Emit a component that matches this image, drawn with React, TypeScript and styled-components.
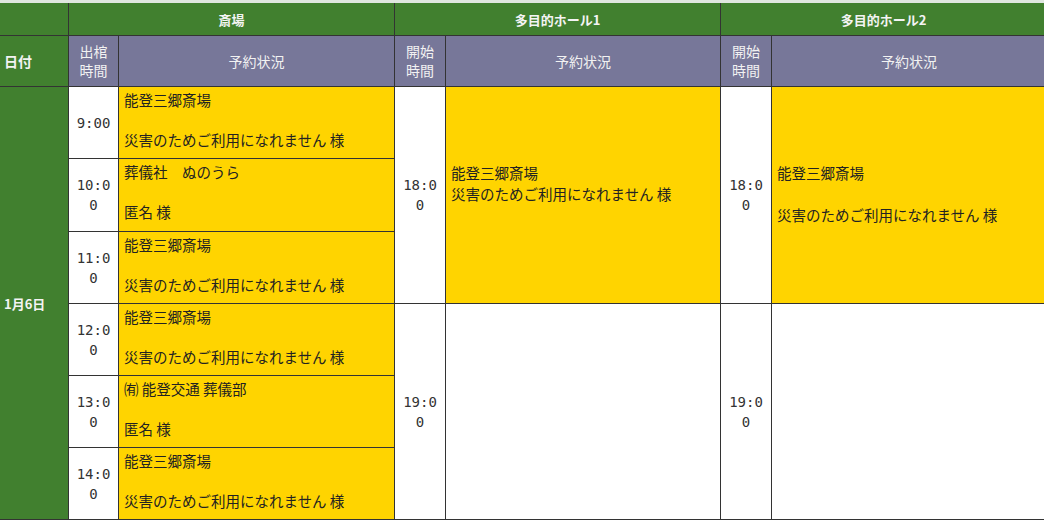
import styled, { createGlobalStyle } from 'styled-components'

const GlobalStyle = createGlobalStyle`
  html, body {
    margin: 0;
    padding: 0;
    background: #dfe7df;
    overflow: hidden;
  }
  body {
    font-family: "Noto Sans CJK JP", "Noto Sans", sans-serif;
    color: #222;
  }
`

const colors = {
  green: '#41802f',
  purple: '#777799',
  gold: '#ffd400',
  line: '#333',
}

const Page = styled.div`
  padding-top: 3px;
  width: 1044px;
  overflow: hidden;
`

const Table = styled.table`
  border-collapse: collapse;
  table-layout: fixed;
  width: 1047px;
  margin-left: -1px;
  font-size: 14.5px;
`

const GroupHead = styled.th`
  background: ${colors.green};
  color: #f4f4f4;
  font-size: 13px;
  font-weight: bold;
  height: 32px;
  padding: 0;
  border: 1px solid ${colors.line};
  border-top: none;
`

const SubHead = styled.th<{ $green?: boolean; $left?: boolean }>`
  background: ${({ $green }) => ($green ? colors.green : colors.purple)};
  color: #f2f2f2;
  font-size: 14px;
  font-weight: ${({ $green }) => ($green ? 'bold' : 'normal')};
  text-align: ${({ $left }) => ($left ? 'left' : 'center')};
  line-height: 19px;
  height: 50px;
  padding: 0 4px;
  border: 1px solid ${colors.line};
`

const DateCell = styled.td`
  background: ${colors.green};
  color: #f4f4f4;
  font-weight: bold;
  font-size: 13px;
  padding: 0 4px;
  border: 1px solid ${colors.line};
`

const TimeCell = styled.td`
  background: #fff;
  font-family: "DejaVu Sans Mono", monospace;
  font-size: 14px;
  line-height: 20px;
  color: #333;
  text-align: center;
  vertical-align: middle;
  word-break: break-all;
  padding: 0 4px;
  border: 1px solid ${colors.line};
`

const StatusCell = styled.td<{ $booked?: boolean; $middle?: boolean }>`
  background: ${({ $booked }) => ($booked ? colors.gold : '#fff')};
  vertical-align: ${({ $middle }) => ($middle ? 'middle' : 'top')};
  line-height: ${({ $middle }) => ($middle ? '21px' : '20px')};
  padding: ${({ $middle }) => ($middle ? '0 5px 3px' : '3px 5px 0')};
  border: 1px solid ${colors.line};
`

const BodyRow = styled.tr<{ $tall?: boolean }>`
  height: ${({ $tall }) => ($tall ? '73px' : '72px')};
`

const Line = styled.div`
  min-height: 1em;
  white-space: nowrap;
`

type Booking = { lines: string[] }

const saijo: { time: string; booking: Booking }[] = [
  { time: '9:00', booking: { lines: ['能登三郷斎場', '', '災害のためご利用になれません 様'] } },
  { time: '10:00', booking: { lines: ['葬儀社　ぬのうら', '', '匿名 様'] } },
  { time: '11:00', booking: { lines: ['能登三郷斎場', '', '災害のためご利用になれません 様'] } },
  { time: '12:00', booking: { lines: ['能登三郷斎場', '', '災害のためご利用になれません 様'] } },
  { time: '13:00', booking: { lines: ['㈲ 能登交通 葬儀部', '', '匿名 様'] } },
  { time: '14:00', booking: { lines: ['能登三郷斎場', '', '災害のためご利用になれません 様'] } },
]

const hall1 = [
  { time: '18:00', lines: ['能登三郷斎場', '災害のためご利用になれません 様', ''] },
  { time: '19:00', lines: [] as string[] },
]

const hall2 = [
  { time: '18:00', lines: ['能登三郷斎場', '', '災害のためご利用になれません 様'] },
  { time: '19:00', lines: [] as string[] },
]

function Lines({ lines }: { lines: string[] }) {
  return (
    <>
      {lines.map((l, i) => (
        <Line key={i}>{l || '\u00a0'}</Line>
      ))}
    </>
  )
}

export default function App() {
  return (
    <Page>
      <GlobalStyle />
      <Table>
        <colgroup>
          <col style={{ width: 69 }} />
          <col style={{ width: 50 }} />
          <col style={{ width: 276 }} />
          <col style={{ width: 51 }} />
          <col style={{ width: 275 }} />
          <col style={{ width: 51 }} />
          <col style={{ width: 275 }} />
        </colgroup>
        <thead>
          <tr>
            <GroupHead />
            <GroupHead colSpan={2}>斎場</GroupHead>
            <GroupHead colSpan={2}>多目的ホール1</GroupHead>
            <GroupHead colSpan={2}>多目的ホール2</GroupHead>
          </tr>
          <tr>
            <SubHead $green $left>日付</SubHead>
            <SubHead>出棺<br />時間</SubHead>
            <SubHead>予約状況</SubHead>
            <SubHead>開始<br />時間</SubHead>
            <SubHead>予約状況</SubHead>
            <SubHead>開始<br />時間</SubHead>
            <SubHead>予約状況</SubHead>
          </tr>
        </thead>
        <tbody>
          {saijo.map((row, i) => {
            const block = i % 3 === 0 ? i / 3 : -1
            return (
              <BodyRow key={row.time} $tall={i === 1}>
                {i === 0 && <DateCell rowSpan={6}>1月6日</DateCell>}
                <TimeCell>{row.time}</TimeCell>
                <StatusCell $booked>
                  <Lines lines={row.booking.lines} />
                </StatusCell>
                {block >= 0 && (
                  <>
                    <TimeCell rowSpan={3}>{hall1[block].time}</TimeCell>
                    <StatusCell rowSpan={3} $middle $booked={hall1[block].lines.length > 0}>
                      <Lines lines={hall1[block].lines} />
                    </StatusCell>
                    <TimeCell rowSpan={3}>{hall2[block].time}</TimeCell>
                    <StatusCell rowSpan={3} $middle $booked={hall2[block].lines.length > 0}>
                      <Lines lines={hall2[block].lines} />
                    </StatusCell>
                  </>
                )}
              </BodyRow>
            )
          })}
        </tbody>
      </Table>
    </Page>
  )
}
